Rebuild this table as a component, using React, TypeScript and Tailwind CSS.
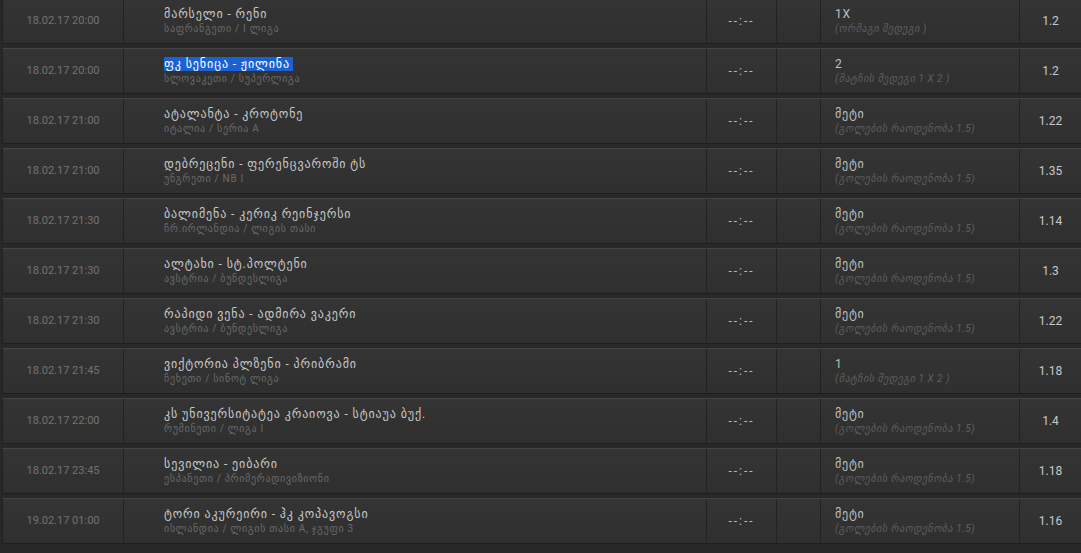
import React from 'react';

type Bet = {
  date: string;
  match: string;
  league: string;
  pick: string;
  market: string;
  odds: string;
  selected?: boolean;
};

const OVER = '(გოლების რაოდენობა 1.5)';

const bets: Bet[] = [
  { date: '18.02.17 20:00', match: 'მარსელი - რენი', league: 'საფრანგეთი / I ლიგა', pick: '1X', market: '(ორმაგი შედეგი )', odds: '1.2' },
  { date: '18.02.17 20:00', match: 'ფკ სენიცა - ჟილინა', league: 'სლოვაკეთი / სუპერლიგა', pick: '2', market: '(მატჩის შედეგი 1 X 2 )', odds: '1.2', selected: true },
  { date: '18.02.17 21:00', match: 'ატალანტა - კროტონე', league: 'იტალია / სერია A', pick: 'მეტი', market: OVER, odds: '1.22' },
  { date: '18.02.17 21:00', match: 'დებრეცენი - ფერენცვაროში ტს', league: 'უნგრეთი / NB I', pick: 'მეტი', market: OVER, odds: '1.35' },
  { date: '18.02.17 21:30', match: 'ბალიმენა - კერიკ რეინჯერსი', league: 'ჩრ.ირლანდია / ლიგის თასი', pick: 'მეტი', market: OVER, odds: '1.14' },
  { date: '18.02.17 21:30', match: 'ალტახი - სტ.პოლტენი', league: 'ავსტრია / ბუნდესლიგა', pick: 'მეტი', market: OVER, odds: '1.3' },
  { date: '18.02.17 21:30', match: 'რაპიდი ვენა - ადმირა ვაკერი', league: 'ავსტრია / ბუნდესლიგა', pick: 'მეტი', market: OVER, odds: '1.22' },
  { date: '18.02.17 21:45', match: 'ვიქტორია პლზენი - პრიბრამი', league: 'ჩეხეთი / სინოტ ლიგა', pick: '1', market: '(მატჩის შედეგი 1 X 2 )', odds: '1.18' },
  { date: '18.02.17 22:00', match: 'კს უნივერსიტატეა კრაიოვა - სტიაუა ბუქ.', league: 'რუმინეთი / ლიგა I', pick: 'მეტი', market: OVER, odds: '1.4' },
  { date: '18.02.17 23:45', match: 'სევილია - ეიბარი', league: 'ესპანეთი / პრიმერადივიზიონი', pick: 'მეტი', market: OVER, odds: '1.18' },
  { date: '19.02.17 01:00', match: 'ტორი აკურეირი - ჰკ კოპავოგსი', league: 'ისლანდია / ლიგის თასი A, ჯგუფი 3', pick: 'მეტი', market: OVER, odds: '1.16' },
];

function BetRow({ bet }: { bet: Bet }) {
  return (
    <div className="flex h-[46px] ml-[2px] border-t border-t-[#444444] border-b border-b-[#1f1f1f] border-l border-l-[#1f1f1f] bg-gradient-to-b from-[#343434] to-[#2f2f2f]">
      <div className="w-[120px] shrink-0 flex items-center justify-center text-[11px] text-[#727272]">
        {bet.date}
      </div>
      <div className="w-[583px] shrink-0 border-l border-[#222222] pl-[40px] flex flex-col justify-center">
        <div className="text-[12px] leading-[15px] tracking-[0.9px] text-[#c8c8c8]">
          {bet.selected ? (
            <span className="bg-[#1a62d4] text-white pr-[3px]">{bet.match}</span>
          ) : (
            bet.match
          )}
        </div>
        <div className="text-[10px] leading-[14px] tracking-[0.7px] text-[#6a6a6a]">{bet.league}</div>
      </div>
      <div className="w-[70px] shrink-0 border-l border-[#222222] flex items-center justify-center text-[12px] tracking-[2px] text-[#bbbbbb]">
        --:--
      </div>
      <div className="w-[44px] shrink-0 border-l border-[#222222]" />
      <div className="w-[199px] shrink-0 border-l border-[#222222] pl-[14px] flex flex-col justify-center">
        <div className="text-[12px] leading-[15px] tracking-[0.8px] text-[#c0c0c0]">{bet.pick}</div>
        <div className="text-[10px] leading-[14px] tracking-[0.55px] italic text-[#5f5f5f]">{bet.market}</div>
      </div>
      <div className="flex-1 border-l border-[#222222] flex items-center justify-center text-[12px] text-[#c8c8c8]">
        {bet.odds}
      </div>
    </div>
  );
}

export default function App() {
  return (
    <div
      className="w-[1081px] h-[553px] overflow-hidden bg-[#282828]"
      style={{ fontFamily: 'Roboto, "DejaVu Sans", sans-serif' }}
    >
      <div className="-mt-[2px] flex flex-col gap-[4px]">
        {bets.map((b, i) => (
          <BetRow key={i} bet={b} />
        ))}
      </div>
    </div>
  );
}
